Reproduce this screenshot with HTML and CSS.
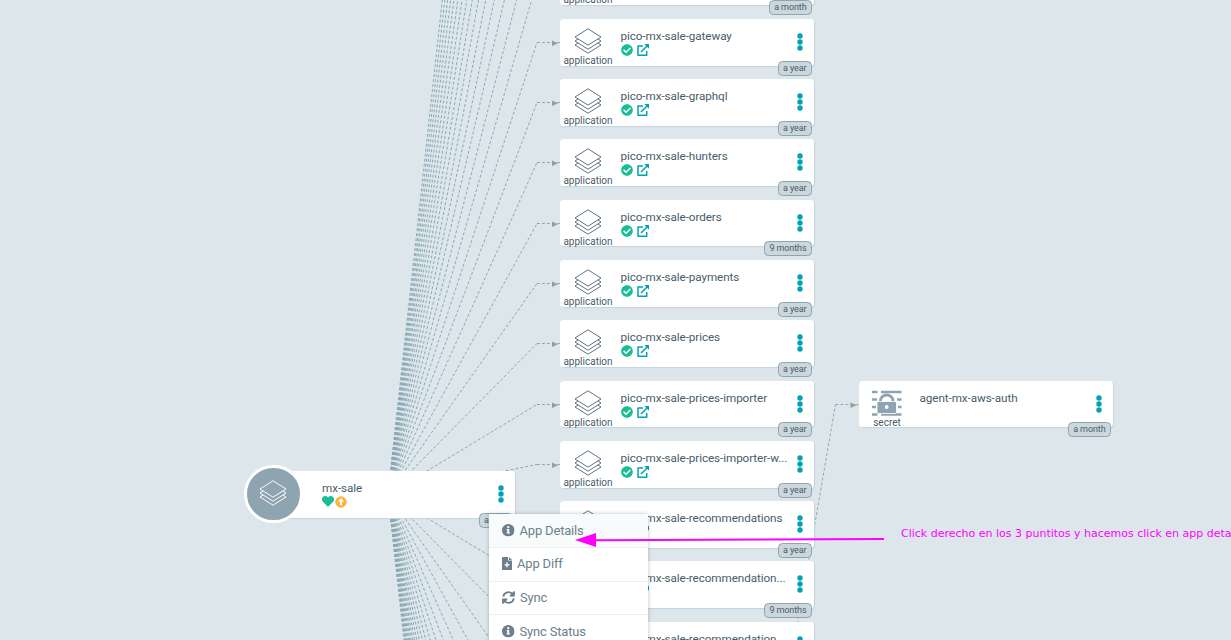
FILE: index.html
```html
<!DOCTYPE html>
<html lang="es">
<head>
<meta charset="utf-8">
<title>mx-sale</title>
<link rel="stylesheet" href="styles.css">
</head>
<body>
<svg class="sprite" aria-hidden="true">
  <symbol id="layers" viewBox="0 0 28 26">
    <path d="M14 .8 27 9 14 17.200 1 9ZM4 11 1 13 14 21.200 27 13 24 11M4 15 1 17 14 25.200 27 17 24 15" fill="none" stroke="currentColor" stroke-width=".95" stroke-linejoin="round"/>
  </symbol>
  <symbol id="check" viewBox="0 0 512 512">
    <path fill="currentColor" d="M504 256c0 137-111 248-248 248S8 393 8 256 119 8 256 8s248 111 248 248zM227.300 387.300l184-184c6.200-6.200 6.200-16.400 0-22.600l-22.600-22.600c-6.200-6.200-16.400-6.200-22.600 0L216 308.100l-70.100-70.100c-6.200-6.200-16.400-6.200-22.600 0l-22.600 22.600c-6.200 6.200-6.200 16.400 0 22.600l104 104c6.200 6.300 16.400 6.300 22.600.1z"/>
  </symbol>
  <symbol id="external" viewBox="0 0 12 12">
    <path fill="none" stroke="currentColor" stroke-width="1.500" stroke-linejoin="round" d="M6 2H1V11.200H9.700V7M4 8 10.300 1.700"/>
    <path fill="currentColor" d="M7.300 0H12V4.700Z"/>
  </symbol>
  <symbol id="dots" viewBox="0 0 6 18">
    <g fill="currentColor"><circle cx="3" cy="3" r="2.700"/><circle cx="3" cy="9" r="2.700"/><circle cx="3" cy="15" r="2.700"/></g>
  </symbol>
  <symbol id="info" viewBox="0 0 12 12">
    <circle cx="6" cy="6" r="6" fill="currentColor"/>
    <path fill="#fff" d="M6 1.900a1.100 1.100 0 1 1 0 2.200 1.100 1.100 0 0 1 0-2.200zM4.500 4.900h2.400V8h.7v1.200H4.500V8h.6V6.100h-.6z"/>
  </symbol>
  <symbol id="file-plus" viewBox="0 0 10 13">
    <path fill="currentColor" d="M.6 0H6v3.500h4v8.900a.6.600 0 0 1-.6.600H.6a.6.600 0 0 1-.6-.6V.6A.6.600 0 0 1 .6 0zM6.900 0 10 3H6.900z"/>
    <path stroke="#fff" stroke-width="1.300" d="M5 5.300v5M2.500 7.800h5"/>
  </symbol>
  <symbol id="sync" viewBox="0 0 13 13">
    <path fill="none" stroke="currentColor" stroke-width="1.800" d="M1.200 5.700A5.300 5.300 0 0 1 10.800 3.500M11.800 7.300A5.300 5.300 0 0 1 2.200 9.500"/>
    <path fill="currentColor" d="M12.900.3v5.200H7.700V4.300L11.700.3zM.1 12.700V7.500h5.200v1.200L1.300 12.700z"/>
  </symbol>
</svg>

<main class="tree">
  <svg class="edges" id="edges" width="1231" height="640"></svg>
  <div id="apps"></div>

  <article class="node root" style="left:261px;top:471px">
    <div class="root-badge"><svg class="layers"><use href="#layers"/></svg></div>
    <div class="info">
      <div class="name">mx-sale</div>
      <div class="status">
        <svg class="heart" viewBox="0 0 12 11"><path d="M6 11 .9 5.700C-.6 4-.2 1.600 1.400.6 2.900-.3 4.700 0 6 1.500 7.300 0 9.100-.3 10.600.6 12.200 1.600 12.600 4 11.100 5.700z"/></svg>
        <svg class="outdated" viewBox="0 0 12 12"><circle cx="6" cy="6" r="5.700"/><path d="M6 2.300 9.100 5.500H7V9.300H5V5.500H2.900z"/></svg>
      </div>
    </div>
    <svg class="dots"><use href="#dots"/></svg>
    <span class="age">a year</span>
  </article>

  <article class="node short" style="left:859px;top:381px">
    <div class="kind">
      <svg class="secret" viewBox="0 0 30 26">
        <path stroke="currentColor" stroke-width="2.300" d="M0 2h5.500M9 2h20.500M25 9.500h4.500M26 17h3.500M0 9.500h5M0 17h4M0 24.500h5.500M9 24.500h20.500" fill="none"/>
        <path d="M8.500 12v-1.500a6.200 5.500 0 0 1 12.400 0V12" fill="none" stroke="currentColor" stroke-width="2.800"/>
        <rect x="5" y="11.500" width="19.500" height="12" rx="1.500" fill="currentColor" stroke="#fff" stroke-width=".8"/>
        <circle cx="14.700" cy="17" r="1.900" fill="#fff"/>
      </svg>
      <span>secret</span>
    </div>
    <div class="info"><div class="name">agent-mx-aws-auth</div></div>
    <svg class="dots"><use href="#dots"/></svg>
    <span class="age">a month</span>
  </article>

  <nav class="menu">
    <a class="item active"><svg class="i12"><use href="#info"/></svg>App Details</a>
    <a class="item"><svg class="i10"><use href="#file-plus"/></svg>App Diff</a>
    <a class="item"><svg class="i13"><use href="#sync"/></svg>Sync</a>
    <a class="item"><svg class="i12"><use href="#info"/></svg>Sync Status</a>
  </nav>

  <svg class="pointer" width="310" height="16" viewBox="0 0 310 16">
    <path d="M20 8.200 309 7" stroke="#f0f" stroke-width="2"/>
    <path d="M0 8 21 1V15z" fill="#f0f"/>
  </svg>
  <p class="note">Click derecho en los 3 puntitos y hacemos click en app deta</p>
</main>
<script src="graph.js"></script>
</body>
</html>
```

FILE: styles.css
```css
body {
  margin: 0;
  background: #dde6eb;
  font-family: Roboto, "Liberation Sans", sans-serif;
  color: #495c69;
}
.sprite { position: absolute; width: 0; height: 0; }
svg { display: block; flex-shrink: 0; }
.tree { position: relative; width: 1231px; height: 640px; overflow: hidden; }
.edges { position: absolute; left: 0; top: 0; }
.edges path { fill: none; stroke: #8aa8b4; stroke-width: 1; stroke-dasharray: 2.9 2.1; }
.edges .tip { fill: #9b9b9b; stroke: none; }
.node {
  position: absolute;
  display: flex;
  box-sizing: border-box;
  width: 254px;
  height: 47px;
  background: #fff;
  border-radius: 3.500px;
  box-shadow: 1px 1px 1px #c5d4dc;
}
.node.short { height: 46px; }
.kind {
  display: flex;
  flex-direction: column;
  align-items: center;
  width: 56px;
  padding-top: 9px;
  font-size: 10px;
  line-height: 14px;
}
.layers { width: 28px; height: 26px; color: #56697a; }
.secret { width: 30px; height: 26px; color: #8fa4b1; }
.info { flex: 1; padding: 10px 0 0 4.500px; min-width: 0; }
.name {
  font-size: 11.700px;
  line-height: 15px;
  letter-spacing: -.08px;
  white-space: nowrap;
}
.status { display: flex; gap: 4px; }
.check { width: 12px; height: 12px; color: #18be94; }
.external { width: 12px; height: 12px; color: #00a2b3; }
.dots { width: 6px; height: 18px; margin: 14.300px 10.600px 0 0; color: #00a2b3; }
.age {
  position: absolute;
  right: 2px;
  bottom: -10px;
  box-sizing: border-box;
  height: 15px;
  padding: 0 4.500px;
  border: 1px solid #8fa4b1;
  border-radius: 4.500px;
  background: #ccd6dd;
  font-size: 9px;
  line-height: 13px;
  letter-spacing: -.1px;
  white-space: nowrap;
}
.root .info { padding-left: 61px; }
.root .status { gap: 1px; }
.root-badge {
  position: absolute;
  left: -17px;
  top: -6.500px;
  display: flex;
  align-items: center;
  justify-content: center;
  width: 52.500px;
  height: 52.500px;
  border: 3px solid #fff;
  border-radius: 50%;
  background: #8fa4b1;
}
.root-badge .layers { color: #fff; margin-top: -2px; }
.heart { width: 12px; height: 11px; fill: #18be94; }
.outdated { width: 12px; height: 12px; fill: #fbb43f; }
.outdated path { fill: #fff; }
.menu {
  position: absolute;
  left: 489px;
  top: 514px;
  width: 159px;
  background: #fff;
  box-shadow: 0 0 4px rgba(60, 80, 95, .35);
}
.item {
  display: flex;
  align-items: center;
  gap: 5px;
  box-sizing: border-box;
  height: 33.800px;
  padding: 0 0 .5px 13px;
  border-bottom: 1px solid #ebeff1;
  color: #6d7f8b;
  font-size: 13px;
  letter-spacing: -.18px;
}
.item.active { background: #f8fbfb; padding-bottom: 0; }
.i12 { width: 12.500px; height: 12.500px; }
.i13 { width: 13px; height: 13px; }
.i10 { width: 10px; height: 13px; }
.pointer { position: absolute; left: 575px; top: 532px; }
.note {
  position: absolute;
  left: 901px;
  top: 527px;
  margin: 0;
  font: 11px/14px "DejaVu Sans", sans-serif;
  color: #f0f;
  white-space: nowrap;
}
```

FILE: graph.js
```js
const apps = [
  [-42, '', 'a month'],
  [19, 'pico-mx-sale-gateway', 'a year'],
  [79, 'pico-mx-sale-graphql', 'a year'],
  [139, 'pico-mx-sale-hunters', 'a year'],
  [200, 'pico-mx-sale-orders', '9 months', 'short'],
  [260, 'pico-mx-sale-payments', 'a year'],
  [320, 'pico-mx-sale-prices', 'a year'],
  [381, 'pico-mx-sale-prices-importer', 'a year', 'short'],
  [441, 'pico-mx-sale-prices-importer-w...', 'a year'],
  [501, 'pico-mx-sale-recommendations', 'a year'],
  [561, 'pico-mx-sale-recommendation...', '9 months'],
  [622, 'pico-mx-sale-recommendation...', 'a year']
];

document.getElementById('apps').innerHTML = apps.map(([top, name, age, size = '']) => `
  <article class="node ${size}" style="left:560px;top:${top}px">
    <div class="kind"><svg class="layers"><use href="#layers"/></svg><span>application</span></div>
    <div class="info">
      <div class="name">${name}</div>
      <div class="status"><svg class="check"><use href="#check"/></svg><svg class="external"><use href="#external"/></svg></div>
    </div>
    <svg class="dots"><use href="#dots"/></svg>
    <span class="age">${age}</span>
  </article>`).join('');

// Each edge leaves the parent's centre, bends before the child and ends in an arrow.
function edge(x, y, kneeX, kneeY) {
  const k = Math.floor(kneeY) + 0.5;
  return `<path d="M${x} ${y}L${kneeX} ${k}"/><path d="M${kneeX} ${k}H${kneeX + 23}"/>` +
    `<path class="tip" d="M${kneeX + 15} ${k - 2}l6 2.800-6 2.800z"/>`;
}
let edges = edge(687, 1264, 835.500, 404);
for (let i = -22; i <= 23; i++) {
  edges += edge(388, 494.500, 537, 464.300 + i * 60.300);
}
document.getElementById('edges').innerHTML = edges;
```
